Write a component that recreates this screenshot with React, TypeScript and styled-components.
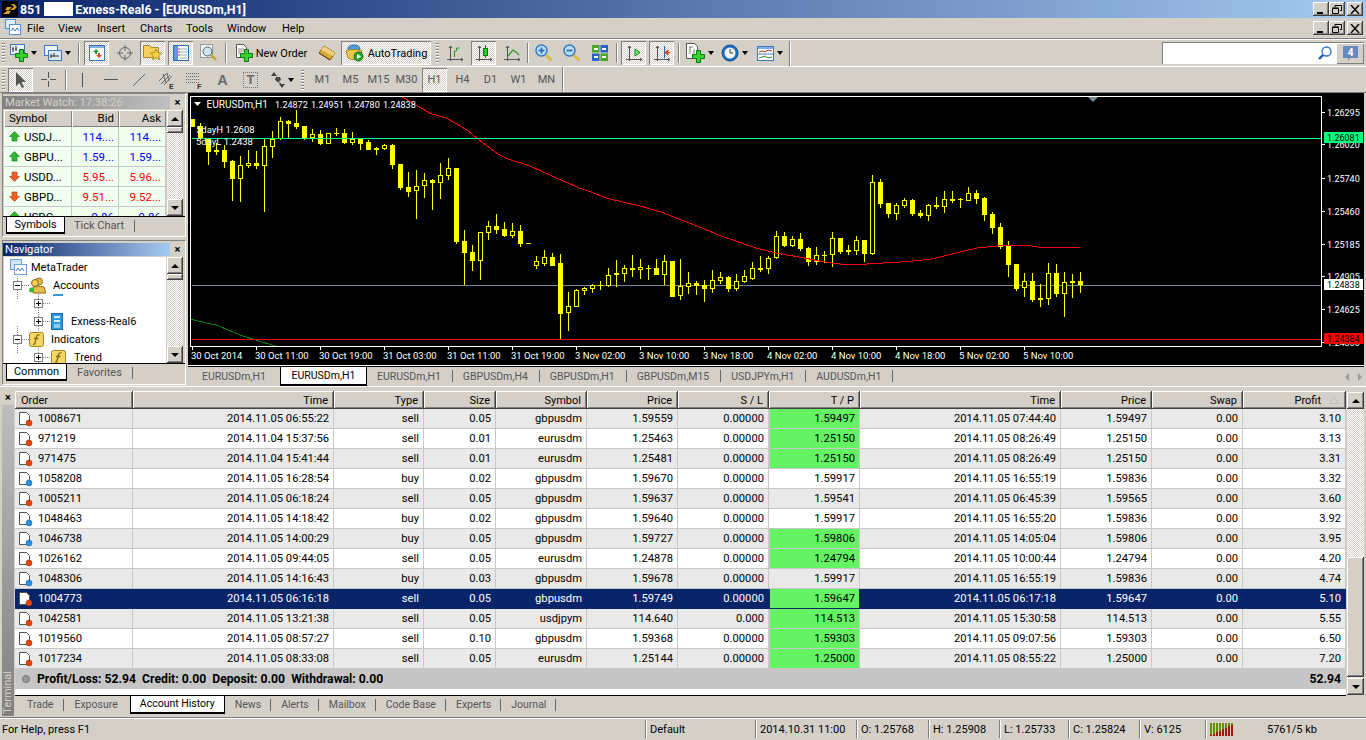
import { Fragment } from "react";
import styled, { createGlobalStyle, css } from "styled-components";

const FACE = "#d4d0c8";
const SHADOW = "#808080";

const GlobalStyle = createGlobalStyle`
  html, body { margin: 0; padding: 0; height: 740px; overflow: hidden; background: ${FACE}; }
  body { font-family: Roboto, "Liberation Sans", sans-serif; font-size: 11px; color: #000; }
  * { box-sizing: border-box; }
`;

const raised = css`
  background: ${FACE};
  box-shadow: inset -1px -1px #404040, inset 1px 1px #fff, inset -2px -2px ${SHADOW};
`;

const dither = css`
  background: repeating-conic-gradient(#fff 0 25%, ${FACE} 0 50%) 0 0 / 2px 2px;
`;

const Page = styled.div`
  width: 1366px;
  height: 740px;
  display: flex;
  flex-direction: column;
  overflow: hidden;
`;

/* title + menu */
const TitleBar = styled.div`
  height: 18px;
  flex: none;
  display: flex;
  align-items: center;
  padding: 0 3px 0 2px;
  background: linear-gradient(90deg, #0a246a, #a6caf0);
  color: #fff;
  font-weight: 700;
  font-size: 12.4px;
`;

const AppLogo = styled.div`
  width: 16px;
  height: 16px;
  background: #000;
  margin-right: 2px;
`;

const Redacted = styled.span`
  width: 29px;
  height: 14px;
  background: #fff;
  margin: 0 2px 0 3px;
`;

const WinButtons = styled.div`
  margin-left: auto;
  display: flex;
  height: 14px;
`;

const WinButton = styled.div<{ $gap?: boolean }>`
  ${raised}
  width: 16px;
  height: 14px;
  margin-left: ${(p) => (p.$gap ? 2 : 0)}px;
  display: flex;
  align-items: center;
  justify-content: center;
`;

const MenuBar = styled.div`
  height: 21px;
  flex: none;
  display: flex;
  align-items: center;
  padding: 0 3px 0 5px;
  border-bottom: 1px solid ${SHADOW};
`;

const MenuItem = styled.span<{ $w: number }>`
  width: ${(p) => p.$w}px;
`;

/* toolbars */
const ToolbarRow = styled.div<{ $h: number }>`
  height: ${(p) => p.$h}px;
  flex: none;
  display: flex;
  align-items: center;
  border-top: 1px solid #fff;
`;

const ToolGroup = styled.div`
  height: 25px;
  display: flex;
  align-items: center;
  gap: 3px;
  padding: 0 3px 0 2px;
  border-right: 1px solid ${SHADOW};
  box-shadow: 1px 0 #fff, 0 1px #fff;
`;

const Grip = styled.div<{ $ml?: number; $mr?: number }>`
  width: 3px;
  height: 20px;
  flex: none;
  margin-left: ${(p) => p.$ml ?? 0}px;
  margin-right: ${(p) => p.$mr ?? 0}px;
  background: repeating-linear-gradient(180deg, ${SHADOW} 0 1px, #fff 1px 2px, ${FACE} 2px 3px);
`;

const Sep = styled.div<{ $m?: number }>`
  width: 1px;
  height: 20px;
  flex: none;
  margin: 0 ${(p) => p.$m ?? 0}px;
  background: ${SHADOW};
  box-shadow: 1px 0 #fff;
`;

const Tool = styled.div<{ $w?: number; $active?: boolean; $dim?: boolean }>`
  width: ${(p) => p.$w ?? 25}px;
  height: 24px;
  flex: none;
  display: flex;
  align-items: center;
  justify-content: center;
  gap: 3px;
  color: ${(p) => (p.$dim ? "#555" : "#000")};
  ${(p) =>
    p.$active &&
    css`
      ${dither}
      box-shadow: inset 1px 1px ${SHADOW}, inset -1px -1px #fff;
    `}
`;

const ToolLetter = styled.span<{ $boxed?: boolean }>`
  font-family: "Liberation Sans", sans-serif;
  font-weight: 700;
  font-size: 14px;
  line-height: 14px;
  color: #666;
  ${(p) => p.$boxed && `border: 1px dotted #777; width: 15px; text-align: center; font-size: 13px;`}
`;

const Caret = styled.span`
  width: 0;
  height: 0;
  flex: none;
  border: 3px solid transparent;
  border-top: 4px solid #000;
  border-bottom: 0;
`;

const SearchBox = styled.div`
  margin: 0 2px 0 auto;
  width: 202px;
  height: 22px;
  background: #fff;
  box-shadow: inset 1px 1px ${SHADOW};
  display: flex;
  align-items: center;
  justify-content: flex-end;
  gap: 4px;
`;

const MessageButton = styled.div`
  width: 28px;
  height: 21px;
  background: ${FACE};
  box-shadow: inset 1px 1px #fff, inset -1px -1px ${SHADOW};
  display: flex;
  align-items: center;
  justify-content: center;
`;

/* workspace */
const Workspace = styled.div`
  height: 294px;
  flex: none;
  display: flex;
  border-top: 1px solid ${SHADOW};
`;

const Sidebar = styled.div`
  width: 188px;
  flex: none;
  padding-left: 2px;
`;

const Panel = styled.div<{ $h: number; $mt?: number }>`
  width: 184px;
  height: ${(p) => p.$h}px;
  margin-top: ${(p) => p.$mt ?? 0}px;
  border: 1px solid;
  border-color: ${SHADOW} #fff #fff ${SHADOW};
  display: flex;
  flex-direction: column;
`;

const PanelHead = styled.div`
  height: 14px;
  margin-top: 1px;
  flex: none;
  display: flex;
  align-items: center;
`;

const PanelTitle = styled.div<{ $active?: boolean }>`
  width: 167px;
  height: 13px;
  padding-left: 2px;
  line-height: 13px;
  font-size: 11.2px;
  ${(p) =>
    p.$active
      ? css`
          background: linear-gradient(90deg, #0a246a, #a6caf0);
          color: #fff;
        `
      : css`
          background: linear-gradient(90deg, ${SHADOW}, #c0c0c0);
          color: ${FACE};
        `}
`;

const CloseX = styled.div`
  flex: 1;
  text-align: center;
  font-size: 11px;
  font-weight: 700;
  line-height: 13px;
`;

const PanelBody = styled.div<{ $h: number; $mt: number }>`
  height: ${(p) => p.$h}px;
  margin: ${(p) => p.$mt}px 0 0 1px;
  flex: none;
  display: flex;
  gap: 1px;
`;

const PaneView = styled.div<{ $pt?: number }>`
  width: 162px;
  overflow: hidden;
  isolation: isolate;
  padding-top: ${(p) => p.$pt ?? 0}px;
  background: #fff;
`;

const ScrollTrack = styled.div<{ $w?: number }>`
  width: ${(p) => p.$w ?? 16}px;
  flex: none;
  display: flex;
  flex-direction: column;
  ${dither}
`;

const ScrollArrow = styled.div<{ $down?: boolean }>`
  ${raised}
  height: 17px;
  flex: none;
  display: flex;
  align-items: center;
  justify-content: center;
  &::after {
    content: "";
    border: 4px solid transparent;
    ${(p) => (p.$down ? "border-top: 4px solid #000; border-bottom: 0;" : "border-bottom: 4px solid #000; border-top: 0;")}
  }
`;

const ScrollFill = styled.div`
  flex: 1;
`;

const ScrollThumb = styled.div<{ $top: number; $h: number }>`
  ${raised}
  height: ${(p) => p.$h}px;
  margin-top: ${(p) => p.$top}px;
`;

const ScrollBar = ({ top, h, w }: { top: number; h: number; w?: number }) => (
  <ScrollTrack $w={w}>
    <ScrollArrow />
    <ScrollFill>
      <ScrollThumb $top={top} $h={h} />
    </ScrollFill>
    <ScrollArrow $down />
  </ScrollTrack>
);

/* tabs shared by all panes */
const TabStrip = styled.div<{ $h?: number; $pl?: number; $fs?: number }>`
  height: ${(p) => p.$h ?? 18}px;
  flex: none;
  display: flex;
  align-items: flex-start;
  padding-left: ${(p) => p.$pl ?? 0}px;
  border-top: 1px solid #000;
  color: #555;
  font-size: ${(p) => p.$fs ?? 11}px;
`;

const Tab = styled.div<{ $active?: boolean; $w?: number; $pr?: number; $pl?: number }>`
  height: 100%;
  flex: none;
  display: flex;
  align-items: center;
  justify-content: ${(p) => (p.$w ? "center" : "flex-start")};
  width: ${(p) => (p.$w ? `${p.$w}px` : "auto")};
  padding: 0 ${(p) => p.$pr ?? 10}px 1px ${(p) => p.$pl ?? 10}px;
  ${(p) =>
    p.$active &&
    css`
      background: #fff;
      color: #000;
      margin-top: -1px;
      height: calc(100% + 1px);
      border: 1px solid #000;
      border-bottom-width: 2px;
    `}
`;

const TabSep = styled.div`
  width: 1px;
  height: 12px;
  margin-top: 3px;
  background: #666;
  flex: none;
`;

/* market watch */
const mwColumns = "68px 47px 47px";

const MwHead = styled.div`
  display: grid;
  grid-template-columns: ${mwColumns};
  height: 17px;
  background: ${FACE};
`;

const MwHeadCell = styled.div<{ $left?: boolean }>`
  box-shadow: inset 1px 1px #fff, inset -1px -1px ${SHADOW};
  text-align: ${(p) => (p.$left ? "left" : "right")};
  padding: 0 5px;
  line-height: 17px;
  font-size: 11.5px;
`;

const MwRow = styled.div`
  display: grid;
  grid-template-columns: ${mwColumns};
  height: 20px;
  background: #f0fff0;
`;

const MwCell = styled.div<{ $c?: string }>`
  display: flex;
  align-items: center;
  justify-content: flex-end;
  gap: 4px;
  padding-right: 4px;
  border-right: 1px solid #c8c8c8;
  border-bottom: 1px solid #c8c8c8;
  color: ${(p) => p.$c ?? "#000"};
  font-size: 11.5px;
  &:first-child {
    justify-content: flex-start;
    padding-left: 5px;
  }
`;

/* navigator tree */
const TreeRow = styled.div<{ $indent: number; $gap?: number }>`
  height: 18px;
  display: flex;
  align-items: center;
  padding-left: ${(p) => p.$indent}px;
  gap: ${(p) => p.$gap ?? 4}px;
  font-size: 11px;
`;

const Expander = styled.div<{ $open?: boolean }>`
  width: 9px;
  height: 9px;
  flex: none;
  position: relative;
  border: 1px solid ${SHADOW};
  background: ${(p) =>
    p.$open
      ? "linear-gradient(#000, #000) center / 5px 1px no-repeat, #fff"
      : "linear-gradient(#000, #000) center / 5px 1px no-repeat, linear-gradient(#000, #000) center / 1px 5px no-repeat, #fff"};
  &::before {
    content: "";
    position: absolute;
    left: 3px;
    top: -10px;
    height: 27px;
    border-left: 1px dotted ${SHADOW};
    z-index: -1;
  }
  &::after {
    content: "";
    position: absolute;
    left: 8px;
    top: 3px;
    width: 7px;
    border-top: 1px dotted ${SHADOW};
  }
`;

const TreeFragment = styled.svg`
  margin: -16px 0 0 10px;
  flex: none;
`;

/* chart */
const ChartColumn = styled.div`
  flex: 1;
  min-width: 0;
  display: flex;
  flex-direction: column;
`;

const ChartBox = styled.div`
  margin-right: 2px;
  height: 273px;
  flex: none;
  background: #000;
  border-bottom: 1px solid #fff;
`;

const ChartSvg = styled.svg`
  display: block;
`;

const ChartTabs = styled(TabStrip)`
  height: 20px;
  margin-right: 2px;
`;

const TabNav = styled.div`
  margin: 6px 2px 0 auto;
  display: flex;
  gap: 9px;
`;

const NavArrow = styled.span<{ $right?: boolean }>`
  width: 0;
  height: 0;
  border: 4px solid transparent;
  ${(p) =>
    p.$right
      ? `border-left: 4px solid #999; border-right: 0;`
      : `border-right: 4px solid #999; border-left: 0;`}
`;

/* terminal */
const Terminal = styled.div`
  height: 331px;
  flex: none;
  display: flex;
  padding: 4px 2px 0;
  border-top: 1px solid #fff;
`;

const TerminalSide = styled.div`
  width: 12px;
  height: 325px;
  flex: none;
  display: flex;
  flex-direction: column;
  justify-content: space-between;
  align-items: center;
  background: linear-gradient(180deg, #c0c0c0, ${SHADOW});
`;

const SideClose = styled.div`
  width: 100%;
  background: ${FACE};
  text-align: center;
  font-weight: 700;
  line-height: 14px;
  height: 14px;
`;

const SideLabel = styled.div`
  writing-mode: vertical-rl;
  transform: rotate(180deg);
  color: ${FACE};
  font-size: 11px;
  line-height: 12px;
  padding-top: 2px;
`;

const TerminalMain = styled.div`
  width: 1331px;
  margin-left: 1px;
  flex: none;
  display: flex;
  flex-direction: column;
  font-size: 11.2px;
`;

const TerminalScroll = styled.div`
  height: 303px;
  margin: 1px 0 0 1px;
  display: flex;
`;

const tableColumns = "118px 201px 90px 72px 91px 91px 91px 91px 201px 91px 91px 103px";

const HeadRow = styled.div`
  display: grid;
  grid-template-columns: ${tableColumns};
  height: 18px;
  flex: none;
`;

const HeadCell = styled.div<{ $left?: boolean }>`
  ${raised}
  display: flex;
  align-items: center;
  justify-content: ${(p) => (p.$left ? "flex-start" : "flex-end")};
  gap: 8px;
  padding: 0 6px;
  font-size: 11px;
`;

const SortMark = styled.svg`
  flex: none;
  margin-right: 1px;
`;

const Row = styled.div<{ $shade?: boolean; $selected?: boolean }>`
  display: grid;
  grid-template-columns: ${tableColumns};
  height: 20px;
  flex: none;
  background: ${(p) => (p.$selected ? "#0a246a" : p.$shade ? "#e9e9e9" : "#fff")};
  color: ${(p) => (p.$selected ? "#fff" : "#000")};
`;

const Cell = styled.div<{ $tp?: boolean; $selected?: boolean }>`
  display: flex;
  align-items: center;
  justify-content: flex-end;
  padding-right: 4px;
  border-right: 1px solid ${(p) => (p.$selected ? "#0a246a" : "#c8c8c8")};
  border-bottom: 1px solid ${(p) => (p.$selected ? "#0a246a" : "#c8c8c8")};
  ${(p) =>
    p.$tp &&
    css`
      background: #63f363;
      color: #000;
      border-left: 1px solid ${p.$selected ? "#0a246a" : "#c8c8c8"};
    `}
`;

const OrderCell = styled(Cell)`
  justify-content: flex-start;
  padding-left: 4px;
  gap: 5px;
`;

const Summary = styled.div`
  height: 20px;
  flex: none;
  display: flex;
  align-items: center;
  background: #c6c6c6;
  font-weight: 700;
  font-size: 12.2px;
  padding: 0 5px 0 7px;
  gap: 7px;
`;

const SummaryText = styled.span`
  flex: 1;
`;

const WhiteGap = styled.div`
  height: 6px;
  flex: none;
  background: #fff;
`;

const StatusBar = styled.div`
  height: 23px;
  flex: none;
  display: grid;
  grid-template-columns: 645px 110px 101px 72px 71px 69px 71px 66px 1fr;
  align-items: center;
  border-top: 1px solid ${SHADOW};
  box-shadow: inset 0 1px #fff;
`;

const StatusCell = styled.div<{ $first?: boolean }>`
  height: 18px;
  display: flex;
  align-items: center;
  padding-left: ${(p) => (p.$first ? 2 : 4)}px;
  ${(p) => !p.$first && `border-left: 1px solid ${SHADOW}; box-shadow: inset 1px 0 #fff;`}
`;

const TrafficText = styled.span`
  margin-left: 33px;
`;

/* icons */
const Plus = ({ x = 0, y = 0 }: { x?: number; y?: number }) => (
  <path
    transform={`translate(${x} ${y})`}
    d="M4.5.5h4v4h4v4h-4v4h-4v-4h-4v-4h4z"
    fill="#34d134"
    stroke="#0b7a0b"
  />
);

const Axes = ({ c = "#555" }: { c?: string }) => (
  <path d="M4.5 2v15M1 15.5h16M3 4l1.5-2L6 4M15 14l2 1.5-2 1.5" fill="none" stroke={c} />
);

const AddChartIcon = () => (
  <svg width="18" height="18" viewBox="0 0 18 18">
    <rect x="0.5" y="0.5" width="14" height="10" fill="#eaf2fb" stroke="#3f78b8" />
    <path d="M3 3v5M2 5h2M6 2v5M5 5h2" stroke="#333" fill="none" />
    <Plus x={5} y={5} />
  </svg>
);

const ProfileIcon = () => (
  <svg width="18" height="16" viewBox="0 0 18 16">
    <rect x="0.5" y="0.5" width="13" height="10" fill="#eaf2fb" stroke="#3f78b8" />
    <rect x="4.5" y="5.5" width="13" height="10" fill="#dbe9f8" stroke="#3f78b8" />
    <path d="M7 9v4M6 11h9M10 8v4" stroke="#333" />
  </svg>
);

const MarketIcon = () => (
  <svg width="16" height="16" viewBox="0 0 16 16">
    <rect x="0.5" y="0.5" width="15" height="15" fill="#fff" stroke="#3f78b8" />
    <rect x="1" y="1" width="14" height="2" fill="#7fb0e6" />
    <path d="M7 4l3 3H8v2H6V7H4z" fill="#1fa81f" />
    <path d="M8 13l3-3H9V8H7v2H5z" transform="translate(2 0)" fill="#e2491a" />
  </svg>
);

const TargetIcon = () => (
  <svg width="16" height="16" viewBox="0 0 16 16" fill="none" stroke="#666">
    <circle cx="8" cy="8" r="5.5" />
    <path d="M8 0v6M8 10v6M0 8h6M10 8h6" />
  </svg>
);

const FolderStarIcon = () => (
  <svg width="20" height="18" viewBox="0 0 20 18">
    <path d="M.5 4.5v-3h6l2 2h7v10h-15z" fill="#f4cf5c" stroke="#a88a2a" />
    <path d="M13 5l1.7 3.6 3.8.5-2.8 2.7.7 3.9-3.4-1.9-3.4 1.9.7-3.9-2.8-2.7 3.8-.5z" fill="#f7d445" stroke="#a88a2a" />
  </svg>
);

const TerminalIcon = () => (
  <svg width="16" height="16" viewBox="0 0 16 16">
    <rect x="0.5" y="0.5" width="15" height="15" fill="#fff" stroke="#2f6fb5" />
    <rect x="1" y="1" width="4" height="14" fill="#5b9ae0" />
    <path d="M7 4h7M7 7h7M7 10h7M7 13h7" stroke="#9aa" />
    <path d="M5 4h2M5 7h2M5 10h2" stroke="#d33" />
  </svg>
);

const TesterIcon = () => (
  <svg width="18" height="18" viewBox="0 0 18 18">
    <rect x="0.5" y="0.5" width="12" height="13" fill="#f3f3f3" stroke="#999" />
    <circle cx="7.5" cy="7.5" r="4.5" fill="#cfe3f7" stroke="#466" />
    <path d="M11 11l5 5" stroke="#c9a21f" strokeWidth="2.4" />
  </svg>
);

const NewOrderIcon = () => (
  <svg width="18" height="18" viewBox="0 0 18 18">
    <path d="M1.5.5h7l3 3v10h-10z" fill="#fff" stroke="#555" />
    <path d="M3 5h6M3 7h6M3 9h3" stroke="#888" />
    <Plus x={5} y={5} />
  </svg>
);

const TomeIcon = () => (
  <svg width="18" height="16" viewBox="0 0 18 16">
    <path d="M6 1l11 7-5 7L1 8z" fill="#d9a93a" stroke="#7a5a10" />
    <path d="M6 1l11 7-2 3L3 5z" fill="#f0d078" />
    <path d="M1 8l11 7" stroke="#5b400a" />
  </svg>
);

const AutoIcon = () => (
  <svg width="20" height="18" viewBox="0 0 20 18">
    <ellipse cx="9" cy="4.5" rx="6" ry="3.5" fill="#4f9fe0" stroke="#2a6aa0" />
    <path d="M1 7c3-2 13-2 16 0l-2 7c-3 2-9 2-12 0z" fill="#f0c64a" stroke="#a58320" />
    <circle cx="13.5" cy="12.5" r="4.5" fill="#28a828" stroke="#0d6a0d" />
    <path d="M12 10l4 2.5-4 2.5z" fill="#fff" />
  </svg>
);

const BarsIcon = () => (
  <svg width="18" height="18" viewBox="0 0 18 18">
    <Axes />
    <path d="M8.5 13V7h2M10.5 7v-3h3" stroke="#1a9a1a" fill="none" />
  </svg>
);

const CandleIcon = () => (
  <svg width="18" height="18" viewBox="0 0 18 18">
    <Axes />
    <path d="M10.5 1v13" stroke="#0a7a0a" />
    <rect x="8.5" y="4.5" width="4" height="7" fill="#22cc22" stroke="#0a7a0a" />
  </svg>
);

const LineIcon = () => (
  <svg width="18" height="18" viewBox="0 0 18 18">
    <Axes />
    <path d="M5 12l5-6 3 2 3 3" stroke="#2a9a2a" fill="none" strokeWidth="1.2" />
  </svg>
);

const ZoomIcon = ({ minus }: { minus?: boolean }) => (
  <svg width="18" height="18" viewBox="0 0 18 18">
    <circle cx="6.5" cy="6.5" r="5.5" fill="#bcdcf8" stroke="#2f78c0" strokeWidth="1.4" />
    <path d="M3.5 6.5h6" stroke="#2767aa" strokeWidth="1.6" />
    {!minus && <path d="M6.5 3.5v6" stroke="#2767aa" strokeWidth="1.6" />}
    <path d="M11 11l5.5 5.5" stroke="#d9bd3a" strokeWidth="2.6" />
  </svg>
);

const TileIcon = () => (
  <svg width="16" height="16" viewBox="0 0 16 16">
    <rect width="7.5" height="7.5" fill="#4aa52a" />
    <rect x="8.5" width="7.5" height="7.5" fill="#2a62c8" />
    <rect y="8.5" width="7.5" height="7.5" fill="#2a62c8" />
    <rect x="8.5" y="8.5" width="7.5" height="7.5" fill="#4aa52a" />
    <path d="M2 4h4M10 4h4M2 12h4M10 12h4" stroke="#fff" strokeWidth="2" />
  </svg>
);

const ScrollIcon = () => (
  <svg width="18" height="18" viewBox="0 0 18 18">
    <Axes />
    <path d="M10 5v7l5-3.5z" fill="#7ae07a" stroke="#0a8a0a" />
  </svg>
);

const ShiftIcon = () => (
  <svg width="18" height="18" viewBox="0 0 18 18">
    <Axes />
    <path d="M11.5 2v12" stroke="#2060b0" />
    <path d="M17 8.5h-3M15 6l-3 2.5 3 2.5z" fill="#d8401a" stroke="#d8401a" />
  </svg>
);

const IndicatorIcon = () => (
  <svg width="20" height="20" viewBox="0 0 20 20">
    <path d="M1.5.5h8l3 3v12h-11z" fill="#fff" stroke="#555" />
    <path d="M4 4h4M5 4v7M9 6v5" stroke="#777" />
    <Plus x={7} y={7} />
  </svg>
);

const ClockIcon = () => (
  <svg width="18" height="18" viewBox="0 0 18 18">
    <circle cx="9" cy="9" r="8" fill="#1c6fc4" stroke="#10508f" />
    <circle cx="9" cy="9" r="5.5" fill="#f2f2f2" />
    <path d="M9 5v4h3" stroke="#444" fill="none" />
  </svg>
);

const TemplateIcon = () => (
  <svg width="17" height="15" viewBox="0 0 17 15">
    <rect x="0.5" y="0.5" width="16" height="14" fill="#fff" stroke="#3f78b8" />
    <rect x="1" y="1" width="15" height="2" fill="#7fb0e6" />
    <path d="M1 8h15" stroke="#3f78b8" />
    <path d="M2 6l3-1 3 1 3-2 4 1" stroke="#a83a1a" fill="none" />
    <path d="M2 12l3-1 3-1 3 2 4-1" stroke="#2a8a2a" fill="none" />
  </svg>
);

const PointerIcon = () => (
  <svg width="12" height="16" viewBox="0 0 12 16">
    <path d="M1 0v14l3.5-3 2.5 5 2-1-2.5-5H11z" fill="#555" />
  </svg>
);

const CrossIcon = () => (
  <svg width="15" height="15" viewBox="0 0 15 15">
    <path d="M7.5 0v6M7.5 9v6M0 7.5h6M9 7.5h6" stroke="#555" />
  </svg>
);

const VLineIcon = () => (
  <svg width="3" height="14" viewBox="0 0 3 14">
    <path d="M1.5 0v14" stroke="#555" />
  </svg>
);

const HLineIcon = () => (
  <svg width="14" height="3" viewBox="0 0 14 3">
    <path d="M0 1.5h14" stroke="#555" />
  </svg>
);

const TrendIcon = () => (
  <svg width="14" height="14" viewBox="0 0 14 14">
    <path d="M1 13L13 1" stroke="#666" />
  </svg>
);

const ChannelIcon = () => (
  <svg width="18" height="20" viewBox="0 0 18 20" stroke="#666" fill="none">
    <path d="M1 11L9 3M3 14l9-9M6 15l8-9M5 4l3 9M9 3l2 8" />
    <text x="11" y="19" fontSize="8" fill="#333" stroke="none" fontWeight="700">E</text>
  </svg>
);

const FiboIcon = () => (
  <svg width="18" height="20" viewBox="0 0 18 20">
    <path d="M0 3.5h14M0 6.5h14M0 9.5h14M0 12.5h14" stroke="#666" strokeDasharray="1 1" />
    <text x="11" y="19" fontSize="8" fill="#333" fontWeight="700">F</text>
  </svg>
);

const ArrowsIcon = () => (
  <svg width="14" height="16" viewBox="0 0 14 16" fill="#444">
    <path d="M3 0l3 4H0zM5 5h4l1 3-3 2-3-2zM11 16l3-4H8z" />
    <path d="M4 7l6 5" stroke="#444" />
  </svg>
);

const MdiIcon = () => (
  <svg width="16" height="16" viewBox="0 0 16 16">
    <rect x="0.5" y="0.5" width="10" height="9" fill="#dbe9f8" stroke="#5a92cc" />
    <rect x="4.5" y="5.5" width="11" height="10" fill="#fff" stroke="#5a92cc" />
    <path d="M6 12l2-3 2 3 2-3 2 3" stroke="#3f78b8" fill="none" />
  </svg>
);

const LogoIcon = () => (
  <svg width="16" height="16" viewBox="0 0 16 16">
    <path d="M1 13l5-4H3l2-3h5L6 10h3l-2 3zM8 9l4-3-3-3h3l3 3-3 3z" fill="#d9a520" />
  </svg>
);

const ArrowIcon = ({ up }: { up: boolean }) => (
  <svg width="11" height="11" viewBox="0 0 11 11">
    <path
      d={up ? "M5.5.5l5 5H8v4.5H3V5.5H.5z" : "M5.5 10.5l5-5H8V1H3v4.5H.5z"}
      fill={up ? "#2fb52f" : "#f0602a"}
      stroke={up ? "#0c7a0c" : "#b03a10"}
      strokeWidth="0.6"
    />
  </svg>
);

const MetaIcon = () => (
  <svg width="17" height="16" viewBox="0 0 17 16">
    <rect x="0.5" y="0.5" width="11" height="10" fill="#d3e4f7" stroke="#6aa0d8" />
    <rect x="4.5" y="5.5" width="12" height="10" fill="#fff" stroke="#6aa0d8" />
    <path d="M6 12l2-3 2 3 2-3 2 3" stroke="#3f78b8" fill="none" />
  </svg>
);

const AccountsIcon = () => (
  <svg width="17" height="17" viewBox="0 0 17 17">
    <circle cx="10" cy="4.5" r="3.5" fill="#e8bf4a" stroke="#8a6a1a" />
    <circle cx="6" cy="6" r="3.5" fill="#f1cc5a" stroke="#8a6a1a" />
    <path d="M4 16V10l5-1 6 1 2 6z" fill="#e8bf4a" stroke="#8a6a1a" />
    <circle cx="2.5" cy="13" r="2.5" fill="#33c033" />
  </svg>
);

const ServerIcon = () => (
  <svg width="12" height="17" viewBox="0 0 12 17">
    <rect x="0.5" y="0.5" width="11" height="16" fill="#2f9ae0" stroke="#1a6aa8" />
    <rect x="3" y="3" width="6" height="2" fill="#d8eefb" />
    <rect x="3" y="7" width="6" height="2" fill="#d8eefb" />
    <rect x="3" y="11" width="6" height="4" fill="#8cc9f0" />
  </svg>
);

const FunctionIcon = () => (
  <svg width="15" height="15" viewBox="0 0 15 15">
    <rect x="0.5" y="0.5" width="14" height="14" rx="2" fill="#f3d766" stroke="#a58320" />
    <path d="M10.5 3C8 2.5 7.5 4 7 7l-1 4c-.3 1.2-1 1.5-2 1.2M5 6.5h4.5" stroke="#8a6a10" fill="none" strokeWidth="1.3" />
  </svg>
);

const DealIcon = ({ sell }: { sell: boolean }) => (
  <svg width="14" height="16" viewBox="0 0 14 16">
    <path d="M.5 1.5h7l3 3v9h-10z" fill="#fff" stroke="#555" />
    <circle cx="10" cy="12" r="3" fill={sell ? "#e8440f" : "#2a93e8"} stroke={sell ? "#a82a00" : "#1566a8"} strokeWidth="0.6" />
  </svg>
);

const MagnifierIcon = () => (
  <svg width="14" height="14" viewBox="0 0 14 14" fill="none">
    <circle cx="8.5" cy="5.5" r="4.5" stroke="#2f6fd0" strokeWidth="1.3" />
    <path d="M5 9l-4 4" stroke="#1f55b0" strokeWidth="2.4" />
  </svg>
);

const MessageIcon = () => (
  <svg width="17" height="17" viewBox="0 0 17 17">
    <path d="M1 1h15v12H8l-2 3v-3H1z" fill="#6688bb" />
    <text x="8.5" y="11" fontSize="10" fontWeight="700" fill="#fff" textAnchor="middle">4</text>
  </svg>
);

const MinGlyph = () => (
  <svg width="10" height="9" viewBox="0 0 10 9">
    <path d="M1 7h6v2H1z" fill="#000" />
  </svg>
);

const MaxGlyph = () => (
  <svg width="10" height="9" viewBox="0 0 10 9" fill="none" stroke="#000">
    <path d="M3 2V.5h6.5v5H8M.5 3.5h6v5h-6zM.5 2.9h6" />
  </svg>
);

const CloseGlyph = () => (
  <svg width="10" height="9" viewBox="0 0 10 9" fill="none" stroke="#000" strokeWidth="1.4">
    <path d="M1 0l8 9M9 0L1 9" />
  </svg>
);

const WindowButtons = () => (
  <WinButtons>
    <WinButton><MinGlyph /></WinButton>
    <WinButton><MaxGlyph /></WinButton>
    <WinButton $gap><CloseGlyph /></WinButton>
  </WinButtons>
);

const SignalIcon = () => (
  <svg width="24" height="13" viewBox="0 0 24 13" shapeRendering="crispEdges">
    {[0, 1, 2, 3, 4, 5, 6, 7].map((i) => (
      <g key={i}>
        <rect x={i * 3} y={0} width="2" height={13} fill="#6b8e00" />
        <rect x={i * 3} y={12 - i * 1.5} width="2" height={1 + i * 1.5} fill="#a81808" />
      </g>
    ))}
  </svg>
);

/* chart data: [high, low, body top, body bottom, filled], y scaled 3x off the page top at 90 */
type Candle = [number, number, number, number, number];
const candles: Candle[] = [
  [87, 111, 87, 111, 1], [100, 150, 108, 146, 1], [146, 224, 148, 186, 1], [160, 196, 180, 186, 1],
  [165, 234, 180, 216, 1], [210, 333, 213, 267, 1], [198, 336, 226, 266, 0], [180, 234, 220, 228, 0],
  [183, 237, 220, 228, 1], [146, 366, 169, 227, 0], [124, 204, 147, 170, 0], [82, 150, 94, 146, 0],
  [90, 146, 93, 101, 1], [60, 117, 99, 110, 1], [108, 150, 108, 144, 1], [117, 156, 133, 144, 0],
  [120, 165, 132, 162, 1], [129, 161, 130, 161, 0], [114, 138, 128, 132, 1], [117, 162, 129, 159, 1],
  [126, 165, 147, 159, 0], [147, 180, 147, 162, 1], [150, 180, 156, 180, 1], [171, 195, 174, 180, 1],
  [162, 180, 166, 177, 0], [162, 237, 165, 225, 1], [222, 300, 222, 294, 1], [246, 321, 291, 306, 1],
  [240, 387, 287, 304, 0], [249, 324, 271, 287, 0], [267, 360, 270, 279, 1], [219, 327, 256, 278, 0],
  [204, 270, 235, 257, 0], [234, 462, 234, 456, 1], [420, 585, 453, 489, 1], [465, 543, 486, 513, 1],
  [426, 570, 426, 513, 0], [393, 450, 408, 428, 0], [372, 432, 408, 420, 1], [396, 441, 417, 438, 1],
  [399, 444, 423, 438, 0], [405, 471, 423, 462, 1], [459, 461, 459, 462, 1], [498, 537, 513, 527, 0],
  [480, 528, 502, 522, 0], [489, 528, 501, 528, 1], [492, 747, 519, 672, 1], [606, 723, 649, 668, 0],
  [598, 651, 600, 651, 0], [591, 615, 594, 603, 0], [582, 609, 585, 597, 0], [573, 600, 585, 588, 1],
  [534, 591, 556, 589, 0], [510, 591, 550, 555, 1], [525, 576, 535, 551, 0], [495, 561, 534, 540, 1],
  [507, 567, 532, 540, 0], [525, 570, 534, 537, 1], [507, 555, 534, 555, 1], [495, 585, 514, 555, 0],
  [513, 621, 513, 621, 1], [507, 630, 588, 618, 0], [546, 612, 580, 590, 0], [573, 615, 579, 587, 1],
  [570, 636, 585, 597, 1], [540, 609, 571, 597, 0], [546, 582, 561, 573, 0], [558, 606, 561, 597, 1],
  [552, 603, 574, 597, 0], [540, 579, 558, 576, 0], [516, 570, 534, 567, 0], [498, 546, 534, 540, 1],
  [498, 552, 504, 537, 0], [423, 507, 438, 505, 0], [426, 471, 438, 468, 1], [438, 471, 447, 468, 0],
  [429, 483, 447, 477, 1], [471, 528, 474, 516, 1], [471, 525, 496, 516, 0], [483, 519, 495, 498, 1],
  [426, 531, 444, 494, 0], [444, 492, 444, 486, 1], [465, 495, 480, 486, 1], [438, 495, 450, 482, 0],
  [450, 516, 450, 492, 1], [255, 495, 277, 492, 0], [267, 354, 276, 342, 1], [339, 384, 339, 372, 1],
  [339, 390, 346, 372, 0], [325, 354, 330, 348, 0], [327, 378, 330, 372, 1], [360, 384, 369, 378, 1],
  [342, 393, 346, 377, 0], [321, 357, 345, 351, 1], [303, 369, 328, 350, 0], [303, 339, 327, 333, 1],
  [324, 354, 327, 330, 1], [291, 333, 309, 332, 0], [300, 342, 309, 327, 1], [321, 393, 324, 375, 1],
  [366, 432, 372, 414, 1], [399, 477, 411, 471, 1], [453, 561, 468, 525, 1], [522, 603, 522, 597, 1],
  [549, 621, 574, 593, 0], [549, 636, 573, 630, 1], [582, 651, 624, 630, 1], [519, 645, 550, 626, 0],
  [522, 621, 549, 612, 1], [546, 681, 577, 611, 0], [552, 624, 573, 579, 1], [546, 609, 573, 586, 1],
];

const zy = (z: number) => Math.round(90 + z / 3);

const toPoints = (pts: number[][]) => pts.map(([x, z]) => `${x},${(90 + z / 3).toFixed(1)}`).join(" ");

const maLine = toPoints([
  [402, 20], [430, 70], [447, 85], [467, 120], [477, 145], [497, 190], [508, 207], [530, 228], [557, 265], [580, 295],
  [590, 305], [607, 325], [640, 348], [663, 368], [690, 400], [723, 440], [757, 475], [777, 490], [803, 503], [823, 515],
  [847, 525], [867, 522], [900, 516], [917, 512], [933, 506], [957, 488], [977, 474], [997, 468], [1028, 466], [1038, 471], [1080, 471],
]);

const greenLine = toPoints([[191, 688], [217, 706], [240, 735], [275, 768]]);

const timeLabels = [
  "30 Oct 2014", "30 Oct 11:00", "30 Oct 19:00", "31 Oct 03:00", "31 Oct 11:00", "31 Oct 19:00", "3 Nov 02:00",
  "3 Nov 10:00", "3 Nov 18:00", "4 Nov 02:00", "4 Nov 10:00", "4 Nov 18:00", "5 Nov 02:00", "5 Nov 10:00",
];

const priceLabels: [string, number][] = [
  ["1.26295", 112], ["1.26020", 144], ["1.25740", 178], ["1.25460", 211],
  ["1.25185", 244], ["1.24905", 276], ["1.24625", 309], ["1.24350", 342],
];

const priceBoxes: [string, number, string][] = [
  ["1.26081", 132, "#00ff7f"],
  ["1.24838", 279, "#fff"],
  ["1.24384", 333, "#ff0000"],
];

const ChartText = styled.text`
  font-family: Roboto, "Liberation Sans", sans-serif;
  font-size: 9.5px;
  fill: ${(p) => p.fill ?? "#fff"};
`;

const ChartPrice = styled(ChartText)`
  font-size: 9px;
`;

const ChartName = styled(ChartText)`
  font-size: 10.1px;
`;

const Chart = () => (
  <ChartSvg width="1176" height="271" viewBox="188 93 1176 271">
    <defs>
      <clipPath id="plot">
        <rect x="191" y="97" width="1130" height="249" />
      </clipPath>
    </defs>
    <g shapeRendering="crispEdges">
      <path d="M191.5 285.5H1321" stroke="#778899" />
      <g clipPath="url(#plot)">
        {candles.map(([hi, lo, top, bot, filled], i) => {
          const x = 192 + 8 * i;
          const t = zy(top);
          const b = zy(bot);
          return (
            <g key={i}>
              <rect x={x} y={zy(hi)} width="1" height={Math.max(zy(lo) - zy(hi), 1)} fill="#ff0" />
              {filled ? (
                <rect x={x - 2} y={t} width="5" height={Math.max(b - t, 1)} fill="#ff0" />
              ) : (
                <rect x={x - 1.5} y={t + 0.5} width="4" height={Math.max(b - t - 1, 1)} fill="#000" stroke="#ff0" />
              )}
            </g>
          );
        })}
        <polyline points={greenLine} fill="none" stroke="#008000" />
        <polyline points={maLine} fill="none" stroke="#ff0000" />
      </g>
      <path d="M191.5 138.5H1321" stroke="#00ff7f" />
      <path d="M191.5 339.5H1321" stroke="#ff0000" />
      <rect x="190.5" y="96.5" width="1131" height="250" fill="none" stroke="#fff" />
      {timeLabels.map((_, i) => (
        <path key={i} d={`M${192.5 + 64 * i} 347v3`} stroke="#fff" />
      ))}
      {priceLabels.map(([, y]) => (
        <path key={y} d={`M1322 ${y + 0.5}h3`} stroke="#fff" />
      ))}
    </g>
    <path d="M1088 97h10l-5 5z" fill="#778899" />
    <path d="M194 102h7l-3.5 4z" fill="#fff" />
    <ChartName x="206.5" y="108">EURUSDm,H1</ChartName>
    <ChartPrice x="275" y="108">1.24872</ChartPrice>
    <ChartPrice x="311" y="108">1.24951</ChartPrice>
    <ChartPrice x="347" y="108">1.24780</ChartPrice>
    <ChartPrice x="383" y="108">1.24838</ChartPrice>
    <ChartText x="196" y="133">5dayH 1.2608</ChartText>
    <ChartText x="196" y="145">5dayL 1.2438</ChartText>
    {timeLabels.map((t, i) => (
      <ChartText key={t} x={191 + 64 * i} y="359">{t}</ChartText>
    ))}
    {priceLabels.map(([p, y]) => (
      <ChartPrice key={p} x="1327" y={y + 4}>{p}</ChartPrice>
    ))}
    {priceBoxes.map(([p, y, c]) => (
      <g key={p}>
        <rect x="1324" y={y} width="39" height="11" fill={c} shapeRendering="crispEdges" />
        <ChartPrice x="1327" y={y + 9} fill="#000">{p}</ChartPrice>
      </g>
    ))}
  </ChartSvg>
);

/* table data */
const columnsHead = ["Order", "Time", "Type", "Size", "Symbol", "Price", "S / L", "T / P", "Time", "Price", "Swap", "Profit"];

type Deal = [string, string, string, string, string, string, string, string, string, string, string, boolean];

const deals: Deal[] = [
  ["1008671", "2014.11.05 06:55:22", "sell", "0.05", "gbpusdm", "1.59559", "0.00000", "1.59497", "2014.11.05 07:44:40", "1.59497", "3.10", true],
  ["971219", "2014.11.04 15:37:56", "sell", "0.01", "eurusdm", "1.25463", "0.00000", "1.25150", "2014.11.05 08:26:49", "1.25150", "3.13", true],
  ["971475", "2014.11.04 15:41:44", "sell", "0.01", "eurusdm", "1.25481", "0.00000", "1.25150", "2014.11.05 08:26:49", "1.25150", "3.31", true],
  ["1058208", "2014.11.05 16:28:54", "buy", "0.02", "gbpusdm", "1.59670", "0.00000", "1.59917", "2014.11.05 16:55:19", "1.59836", "3.32", false],
  ["1005211", "2014.11.05 06:18:24", "sell", "0.05", "gbpusdm", "1.59637", "0.00000", "1.59541", "2014.11.05 06:45:39", "1.59565", "3.60", false],
  ["1048463", "2014.11.05 14:18:42", "buy", "0.02", "gbpusdm", "1.59640", "0.00000", "1.59917", "2014.11.05 16:55:20", "1.59836", "3.92", false],
  ["1046738", "2014.11.05 14:00:29", "buy", "0.05", "gbpusdm", "1.59727", "0.00000", "1.59806", "2014.11.05 14:05:04", "1.59806", "3.95", true],
  ["1026162", "2014.11.05 09:44:05", "sell", "0.05", "eurusdm", "1.24878", "0.00000", "1.24794", "2014.11.05 10:00:44", "1.24794", "4.20", true],
  ["1048306", "2014.11.05 14:16:43", "buy", "0.03", "gbpusdm", "1.59678", "0.00000", "1.59917", "2014.11.05 16:55:19", "1.59836", "4.74", false],
  ["1004773", "2014.11.05 06:16:18", "sell", "0.05", "gbpusdm", "1.59749", "0.00000", "1.59647", "2014.11.05 06:17:18", "1.59647", "5.10", true],
  ["1042581", "2014.11.05 13:21:38", "sell", "0.05", "usdjpym", "114.640", "0.000", "114.513", "2014.11.05 15:30:58", "114.513", "5.55", true],
  ["1019560", "2014.11.05 08:57:27", "sell", "0.10", "gbpusdm", "1.59368", "0.00000", "1.59303", "2014.11.05 09:07:56", "1.59303", "6.50", true],
  ["1017234", "2014.11.05 08:33:08", "sell", "0.05", "eurusdm", "1.25144", "0.00000", "1.25000", "2014.11.05 08:55:22", "1.25000", "7.20", true],
];

const SELECTED = "1004773";

const watch: [string, string, string, boolean][] = [
  ["USDJ...", "114....", "114....", true],
  ["GBPU...", "1.59...", "1.59...", true],
  ["USDD...", "5.95...", "5.96...", false],
  ["GBPD...", "9.51...", "9.52...", false],
  ["USDC", "9.86", "9.86", true],
];

const menus: [string, number][] = [
  ["File", 31], ["View", 39], ["Insert", 43], ["Charts", 46], ["Tools", 41], ["Window", 55], ["Help", 40],
];

const chartTabs = ["EURUSDm,H1", "GBPUSDm,H4", "GBPUSDm,H1", "GBPUSDm,M15", "USDJPYm,H1", "AUDUSDm,H1"];
const terminalTabs = ["News", "Alerts", "Mailbox", "Code Base", "Experts", "Journal"];
const frames = ["M1", "M5", "M15", "M30", "H1", "H4", "D1", "W1", "MN"];

export default function App() {
  return (
    <Page>
      <GlobalStyle />
      <TitleBar>
        <AppLogo><LogoIcon /></AppLogo>
        851<Redacted /> Exness-Real6 - [EURUSDm,H1]
        <WindowButtons />
      </TitleBar>
      <MenuBar>
        <MenuItem $w={22}><MdiIcon /></MenuItem>
        {menus.map(([m, w]) => (
          <MenuItem key={m} $w={w}>{m}</MenuItem>
        ))}
        <WindowButtons />
      </MenuBar>

      <ToolbarRow $h={27}>
        <ToolGroup>
          <Grip />
          <Tool $w={31}><AddChartIcon /><Caret /></Tool>
          <Tool $w={31}><ProfileIcon /><Caret /></Tool>
          <Sep $m={2} />
          <Tool $active><MarketIcon /></Tool>
          <Tool><TargetIcon /></Tool>
          <Tool $active><FolderStarIcon /></Tool>
          <Tool $active><TerminalIcon /></Tool>
          <Tool><TesterIcon /></Tool>
          <Sep $m={1} />
          <Tool $w={82}><NewOrderIcon />New Order</Tool>
          <Tool $w={23}><TomeIcon /></Tool>
          <Tool $w={90} $active><AutoIcon />AutoTrading</Tool>
          <Grip $ml={2} />
          <Tool $w={26}><BarsIcon /></Tool>
          <Tool $active><CandleIcon /></Tool>
          <Tool><LineIcon /></Tool>
          <Sep />
          <Tool><ZoomIcon /></Tool>
          <Tool><ZoomIcon minus /></Tool>
          <Tool><TileIcon /></Tool>
          <Sep $m={1} />
          <Tool $active><ScrollIcon /></Tool>
          <Tool $active><ShiftIcon /></Tool>
          <Sep $m={1} />
          <Tool $w={32}><IndicatorIcon /><Caret /></Tool>
          <Tool $w={33}><ClockIcon /><Caret /></Tool>
          <Tool $w={32}><TemplateIcon /><Caret /></Tool>
        </ToolGroup>
        <SearchBox>
          <MagnifierIcon />
          <MessageButton><MessageIcon /></MessageButton>
        </SearchBox>
      </ToolbarRow>

      <ToolbarRow $h={26}>
        <ToolGroup>
          <Grip />
          <Tool $active><PointerIcon /></Tool>
          <Tool><CrossIcon /></Tool>
          <Sep $m={1} />
          <Tool><VLineIcon /></Tool>
          <Tool><HLineIcon /></Tool>
          <Tool><TrendIcon /></Tool>
          <Tool><ChannelIcon /></Tool>
          <Tool><FiboIcon /></Tool>
          <Tool $dim><ToolLetter>A</ToolLetter></Tool>
          <Tool $dim><ToolLetter $boxed>T</ToolLetter></Tool>
          <Tool $w={32}><ArrowsIcon /><Caret /></Tool>
          <Grip $mr={3} />
          {frames.map((f) => (
            <Tool key={f} $dim $active={f === "H1"}>{f}</Tool>
          ))}
        </ToolGroup>
      </ToolbarRow>

      <Workspace>
        <Sidebar>
          <Panel $h={144}>
            <PanelHead>
              <PanelTitle>Market Watch: 17:38:26</PanelTitle>
              <CloseX>×</CloseX>
            </PanelHead>
            <PanelBody $h={106} $mt={1}>
              <PaneView>
                <MwHead>
                  <MwHeadCell $left>Symbol</MwHeadCell>
                  <MwHeadCell>Bid</MwHeadCell>
                  <MwHeadCell>Ask</MwHeadCell>
                </MwHead>
                {watch.map(([s, b, a, up]) => (
                  <MwRow key={s}>
                    <MwCell><ArrowIcon up={up} />{s}</MwCell>
                    <MwCell $c={up ? "#0000ff" : "#ff0000"}>{b}</MwCell>
                    <MwCell $c={up ? "#0000ff" : "#ff0000"}>{a}</MwCell>
                  </MwRow>
                ))}
              </PaneView>
              <ScrollBar top={0} h={6} />
            </PanelBody>
            <TabStrip $pl={3}>
              <Tab $active $w={59} $pl={0} $pr={0}>Symbols</Tab>
              <Tab $pl={9}>Tick Chart</Tab>
              <TabSep />
            </TabStrip>
          </Panel>

          <Panel $h={145} $mt={3}>
            <PanelHead>
              <PanelTitle $active>Navigator</PanelTitle>
              <CloseX>×</CloseX>
            </PanelHead>
            <PanelBody $h={106} $mt={1}>
              <PaneView $pt={1}>
                <TreeRow $indent={6}><MetaIcon />MetaTrader</TreeRow>
                <TreeRow $indent={9} $gap={7}><Expander $open /><AccountsIcon />Accounts</TreeRow>
                <TreeRow $indent={30} $gap={0}>
                  <Expander />
                  <TreeFragment width="60" height="2" viewBox="0 0 60 2">
                    <rect width="10" height="2" fill="#2f9ae0" />
                  </TreeFragment>
                </TreeRow>
                <TreeRow $indent={30} $gap={8}><Expander /><ServerIcon /><span>Exness-Real6</span></TreeRow>
                <TreeRow $indent={9} $gap={7}><Expander $open /><FunctionIcon />Indicators</TreeRow>
                <TreeRow $indent={30} $gap={8}><Expander /><FunctionIcon />Trend</TreeRow>
              </PaneView>
              <ScrollBar top={0} h={6} />
            </PanelBody>
            <TabStrip $pl={3}>
              <Tab $active $w={61} $pl={0} $pr={0}>Common</Tab>
              <Tab>Favorites</Tab>
              <TabSep />
            </TabStrip>
          </Panel>
        </Sidebar>

        <ChartColumn>
          <ChartBox><Chart /></ChartBox>
          <ChartTabs $fs={10.5}>
            <Tab $w={92} $pl={0} $pr={0}>EURUSDm,H1</Tab>
            <Tab $active $w={87} $pl={0} $pr={0}>EURUSDm,H1</Tab>
            {chartTabs.map((t) => (
              <Fragment key={t}>
                <Tab $pr={11}>{t}</Tab>
                <TabSep />
              </Fragment>
            ))}
            <TabNav>
              <NavArrow />
              <NavArrow $right />
            </TabNav>
          </ChartTabs>
        </ChartColumn>
      </Workspace>

      <Terminal>
        <TerminalSide>
          <SideClose>×</SideClose>
          <SideLabel>Terminal</SideLabel>
        </TerminalSide>
        <TerminalMain>
          <HeadRow>
            {columnsHead.map((c, i) => (
              <HeadCell key={`${c}${i}`} $left={i === 0}>
                {c}
                {c === "Profit" && (
                  <SortMark width="10" height="8" viewBox="0 0 10 8">
                    <path d="M5 .5l4.5 7H.5z" fill="none" stroke="#bbb" />
                  </SortMark>
                )}
              </HeadCell>
            ))}
          </HeadRow>
          {deals.map((d, i) => {
            const selected = d[0] === SELECTED;
            return (
              <Row key={d[0]} $selected={selected} $shade={i % 2 === 0}>
                <OrderCell $selected={selected}>
                  <DealIcon sell={d[2] === "sell"} />
                  {d[0]}
                </OrderCell>
                <Cell $selected={selected}>{d[1]}</Cell>
                <Cell $selected={selected}>{d[2]}</Cell>
                <Cell $selected={selected}>{d[3]}</Cell>
                <Cell $selected={selected}>{d[4]}</Cell>
                <Cell $selected={selected}>{d[5]}</Cell>
                <Cell $selected={selected}>{d[6]}</Cell>
                <Cell $selected={selected} $tp={d[11]}>{d[7]}</Cell>
                <Cell $selected={selected}>{d[8]}</Cell>
                <Cell $selected={selected}>{d[9]}</Cell>
                <Cell $selected={selected}>0.00</Cell>
                <Cell $selected={selected}>{d[10]}</Cell>
              </Row>
            );
          })}
          <Summary>
            <svg width="8" height="8" viewBox="0 0 8 8">
              <circle cx="4" cy="4" r="3.5" fill="#999" stroke="#777" />
            </svg>
            <SummaryText>Profit/Loss: 52.94&nbsp; Credit: 0.00&nbsp; Deposit: 0.00&nbsp; Withdrawal: 0.00</SummaryText>
            52.94
          </Summary>
          <WhiteGap />
          <TabStrip $h={19} $pl={2} $fs={10.5}>
            <Tab>Trade</Tab>
            <TabSep />
            <Tab $pr={12}>Exposure</Tab>
            <Tab $active $w={95} $pl={0} $pr={0}>Account History</Tab>
            {terminalTabs.map((t) => (
              <Fragment key={t}>
                <Tab $pr={9}>{t}</Tab>
                <TabSep />
              </Fragment>
            ))}
          </TabStrip>
        </TerminalMain>
        <TerminalScroll>
          <ScrollBar top={148} h={120} w={17} />
        </TerminalScroll>
      </Terminal>

      <StatusBar>
        <StatusCell $first>For Help, press F1</StatusCell>
        <StatusCell>Default</StatusCell>
        <StatusCell>2014.10.31 11:00</StatusCell>
        <StatusCell>O: 1.25768</StatusCell>
        <StatusCell>H: 1.25908</StatusCell>
        <StatusCell>L: 1.25733</StatusCell>
        <StatusCell>C: 1.25824</StatusCell>
        <StatusCell>V: 6125</StatusCell>
        <StatusCell><SignalIcon /><TrafficText>5761/5 kb</TrafficText></StatusCell>
      </StatusBar>
    </Page>
  );
}
